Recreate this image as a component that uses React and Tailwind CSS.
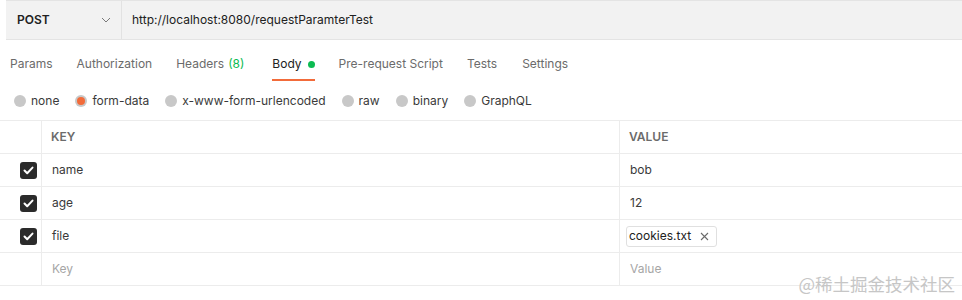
import React from "react";

const font = { fontFamily: "Inter, 'Noto Sans', sans-serif" };

function Radio({ checked, label }) {
  return (
    <div className="flex items-center gap-[5px]">
      {checked ? (
        <span className="w-[12px] h-[12px] rounded-full bg-[#c8c8c8] flex items-center justify-center">
          <span className="w-[8px] h-[8px] rounded-full bg-[#f26b3a]" />
        </span>
      ) : (
        <span className="w-[12px] h-[12px] rounded-full bg-[#c8c8c8]" />
      )}
      <span className="text-[12px] text-[#3a3a3a]">{label}</span>
    </div>
  );
}

function Check() {
  return (
    <span className="w-[17px] h-[17px] rounded-[3px] bg-[#2b2b2b] flex items-center justify-center">
      <svg width="11" height="9" viewBox="0 0 11 9">
        <path d="M1.5 4.5 L4.2 7.2 L9.5 1.6" stroke="white" strokeWidth="2" fill="none" strokeLinecap="round" strokeLinejoin="round" />
      </svg>
    </span>
  );
}

function Row({ k, v, checked, placeholder, file }) {
  return (
    <div className="flex h-[33px] border-b border-[#ececec]">
      <div className="w-[42px] border-r border-[#ececec] flex items-center justify-end pr-[4px]">
        {checked && <Check />}
      </div>
      <div className={`w-[578px] border-r border-[#ececec] flex items-center pl-[10px] text-[12px] ${placeholder ? "text-[#a6a6a6]" : "text-[#3a3a3a]"}`}>{k}</div>
      <div className={`flex-1 flex items-center pl-[6px] text-[12px] ${placeholder ? "text-[#a6a6a6]" : "text-[#3a3a3a]"}`}>
        {file ? (
          <span className="flex items-center gap-[9px] border border-[#e0e0e0] rounded-[3px] h-[21px] pl-[2px] pr-[7px] text-[#212121]">
            {v}
            <svg width="9" height="9" viewBox="0 0 9 9"><path d="M1 1 L8 8 M8 1 L1 8" stroke="#6b6b6b" strokeWidth="1.1" /></svg>
          </span>
        ) : (
          <span className="pl-[4px]">{v}</span>
        )}
      </div>
    </div>
  );
}

export default function App() {
  return (
    <div className="w-[962px] h-[300px] bg-white relative overflow-hidden" style={font}>
      <div className="ml-[6px] h-[40px] flex bg-[#f2f2f2] border-y border-[#e4e4e4]">
        <div className="w-[116px] flex items-center justify-between pl-[11px] pr-[10px] border-r border-[#e2e2e2]">
          <span className="text-[12px] font-semibold text-[#212121]">POST</span>
          <svg width="10" height="6" viewBox="0 0 10 6"><path d="M1 1 L5 5 L9 1" stroke="#7a7a7a" strokeWidth="1" fill="none" /></svg>
        </div>
        <div className="flex items-center pl-[10px] text-[12px] text-[#212121]">http://localhost:8080/requestParamterTest</div>
      </div>

      <div className="flex h-[40px] items-stretch pl-[10px] text-[12px] text-[#6b6b6b] mt-[4px]">
        <div className="flex items-center mr-[24px]">Params</div>
        <div className="flex items-center mr-[24px]">Authorization</div>
        <div className="flex items-center mr-[28px]">Headers <span className="ml-[4px] text-[#0cbb52]">(8)</span></div>
        <div className="relative flex items-center mr-[24px] text-[#212121]">
          Body <span className="ml-[6px] w-[7px] h-[7px] rounded-full bg-[#0cbb52]" />
          <span className="absolute left-0 right-0 bottom-[3px] h-[2px] bg-[#f26b3a]" />
        </div>
        <div className="flex items-center mr-[24px]">Pre-request Script</div>
        <div className="flex items-center mr-[25px]">Tests</div>
        <div className="flex items-center">Settings</div>
      </div>

      <div className="flex items-center h-[34px] pl-[14px] gap-[16px]">
        <Radio label="none" />
        <Radio checked label="form-data" />
        <Radio label="x-www-form-urlencoded" />
        <Radio label="raw" />
        <Radio label="binary" />
        <Radio label="GraphQL" />
      </div>

      <div className="border-t border-[#ececec] mt-[2px]">
        <div className="flex h-[33px] border-b border-[#ececec]">
          <div className="w-[42px] border-r border-[#ececec]" />
          <div className="w-[578px] border-r border-[#ececec] flex items-center pl-[9px] text-[12px] font-semibold text-[#6b6b6b]">KEY</div>
          <div className="flex-1 flex items-center pl-[9px] text-[12px] font-semibold text-[#6b6b6b]">VALUE</div>
        </div>
        <Row checked k="name" v="bob" />
        <Row checked k="age" v="12" />
        <Row checked k="file" v="cookies.txt" file />
        <Row placeholder k="Key" v="Value" />
      </div>

      <div className="absolute right-[7px] bottom-[3px] text-[17.5px] text-[#c6c6c6]" style={{ fontFamily: "'Noto Sans CJK SC', sans-serif" }}>@稀土掘金技术社区</div>
    </div>
  );
}
